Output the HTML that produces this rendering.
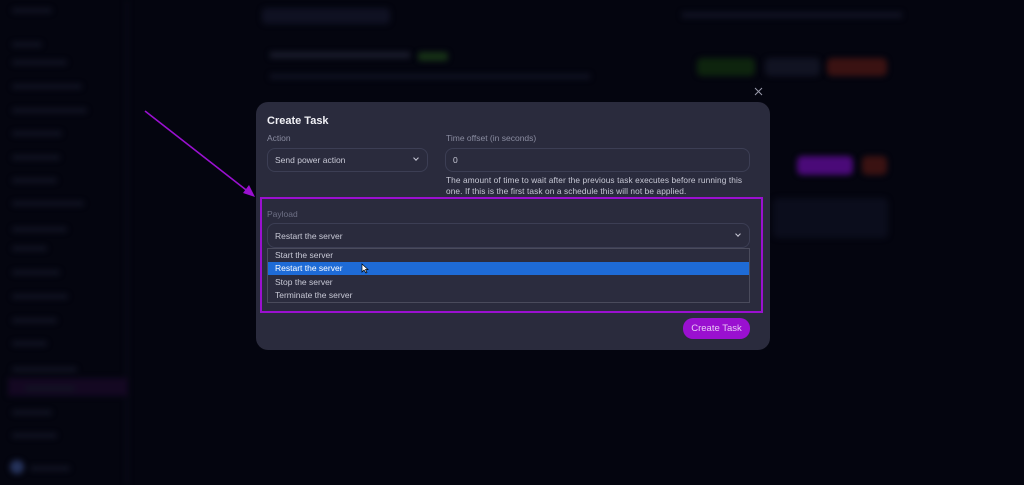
<!DOCTYPE html>
<html><head><style>
*{margin:0;padding:0;box-sizing:border-box}
body{width:1024px;height:485px;background:#04050f;overflow:hidden;position:relative;font-family:"Liberation Sans",sans-serif}
.a{position:absolute}
.blur{filter:blur(3px)}
.sb{left:0;top:0;width:128px;height:485px;border-right:2px solid #0a0c1a}
.it{position:absolute;left:12px;height:5px;width:50px;background:#111322;border-radius:3px}
.modal{left:256px;top:102px;width:514px;height:248px;background:#2a2b3d;border-radius:12px}
.lbl{font-size:8.5px;color:#8a8ca0}
.inp{border:1px solid #3c3e54;border-radius:8px;background:#2a2b3d;font-size:8.5px;color:#c8c9d6;padding-left:7px;display:flex;align-items:center}
.opt{position:absolute;left:7px;font-size:8.5px;color:#c8c9d6}
.chev{position:absolute;width:4px;height:4px;border-right:1.2px solid #c8c9d6;border-bottom:1.2px solid #c8c9d6;transform:rotate(45deg)}
</style></head><body>
<div class="a sb blur">
<div class="it" style="top:8px;width:40px"></div>
<div class="it" style="top:42px;width:30px"></div>
<div class="it" style="top:60px;width:55px"></div>
<div class="it" style="top:84px;width:70px"></div>
<div class="it" style="top:108px;width:75px"></div>
<div class="it" style="top:131px;width:50px"></div>
<div class="it" style="top:155px;width:48px"></div>
<div class="it" style="top:178px;width:45px"></div>
<div class="it" style="top:201px;width:72px"></div>
<div class="it" style="top:227px;width:55px"></div>
<div class="it" style="top:246px;width:35px"></div>
<div class="it" style="top:270px;width:48px"></div>
<div class="it" style="top:294px;width:56px"></div>
<div class="it" style="top:318px;width:45px"></div>
<div class="it" style="top:341px;width:35px"></div>
<div class="it" style="top:367px;width:65px"></div>
<div style="position:absolute;left:8px;top:378px;width:120px;height:18px;background:#140822"></div>
<div class="it" style="top:386px;width:50px;left:25px"></div>
<div class="it" style="top:410px;width:40px"></div>
<div class="it" style="top:433px;width:45px"></div>
<div style="position:absolute;left:10px;top:460px;width:14px;height:14px;border-radius:50%;background:#25325a"></div>
<div class="it" style="top:466px;left:30px;width:40px"></div>
</div>
<div class="a blur" style="left:262px;top:8px;width:128px;height:16px;background:#0f1122;border-radius:4px"></div>
<div class="a blur" style="left:270px;top:52px;width:140px;height:6px;background:#1a1c2c"></div>
<div class="a blur" style="left:418px;top:52px;width:30px;height:9px;background:#163016;border-radius:3px"></div>
<div class="a blur" style="left:270px;top:74px;width:320px;height:5px;background:#101222"></div>
<div class="a blur" style="left:682px;top:12px;width:220px;height:6px;background:#101222"></div>
<div class="a blur" style="left:697px;top:58px;width:58px;height:18px;background:#0e240e;border-radius:5px"></div>
<div class="a blur" style="left:765px;top:58px;width:55px;height:18px;background:#111322;border-radius:5px"></div>
<div class="a blur" style="left:827px;top:58px;width:60px;height:18px;background:#3a1212;border-radius:5px"></div>
<div class="a blur" style="left:797px;top:156px;width:56px;height:19px;background:#4a0a78;border-radius:5px"></div>
<div class="a blur" style="left:862px;top:156px;width:25px;height:19px;background:#3a1212;border-radius:5px"></div>
<div class="a blur" style="left:773px;top:198px;width:115px;height:40px;background:#0b0d1c;border-radius:5px"></div>

<svg class="a" style="left:0;top:0" width="1024" height="485">
<line x1="145" y1="111" x2="250" y2="193" stroke="#9a10d0" stroke-width="1.6"/>
<polygon points="255,197 243,193 249,185" fill="#9a10d0"/>
<path d="M755 88 L762 95 M762 88 L755 95" stroke="#9a9bab" stroke-width="1"/>
</svg>

<div class="a modal">
<div class="a" style="left:11px;top:13px;font-size:11px;font-weight:bold;color:#f0f0f5">Create Task</div>
<div class="a lbl" style="left:11px;top:31px">Action</div>
<div class="a lbl" style="left:190px;top:31px">Time offset (in seconds)</div>
<div class="a inp" style="left:11px;top:46px;width:161px;height:24px">Send power action</div>
<div class="chev" style="left:158px;top:54px"></div>
<div class="a inp" style="left:189px;top:46px;width:305px;height:24px">0</div>
<div class="a" style="left:190px;top:73px;font-size:8.3px;line-height:10.5px;color:#c8c9d6;width:300px;letter-spacing:0.1px">The amount of time to wait after the previous task executes before running this one. If this is the first task on a schedule this will not be applied.</div>
<div class="a" style="left:4px;top:95px;width:503px;height:116px;border:2px solid #9a10d0"></div>
<div class="a lbl" style="left:11px;top:107px;color:#6e7086">Payload</div>
<div class="a inp" style="left:11px;top:121px;width:483px;height:25px">Restart the server</div>
<div class="chev" style="left:480px;top:130px"></div>
<div class="a" style="left:11px;top:146px;width:483px;height:55px;background:#2b2c3e;border:1px solid #4a4b5c">
<div class="opt" style="top:1px">Start the server</div>
<div style="position:absolute;left:0;top:13px;width:481px;height:13px;background:#1e6bd6"></div>
<div class="opt" style="top:14px;color:#fff">Restart the server</div>
<div class="opt" style="top:28px">Stop the server</div>
<div class="opt" style="top:41px">Terminate the server</div>
</div>
<svg class="a" style="left:105px;top:161px" width="8" height="11"><path d="M1 1 L1 9 L3 7 L5 10 L6 9.5 L4.5 6.5 L7 6.5 Z" fill="#fff" stroke="#000" stroke-width="0.7"/></svg>
<div class="a" style="left:427px;top:216px;width:67px;height:21px;background:#9a10d0;border-radius:10px;color:#e8c8f5;font-size:9.5px;display:flex;align-items:center;justify-content:center">Create Task</div>
</div>
</body></html>
